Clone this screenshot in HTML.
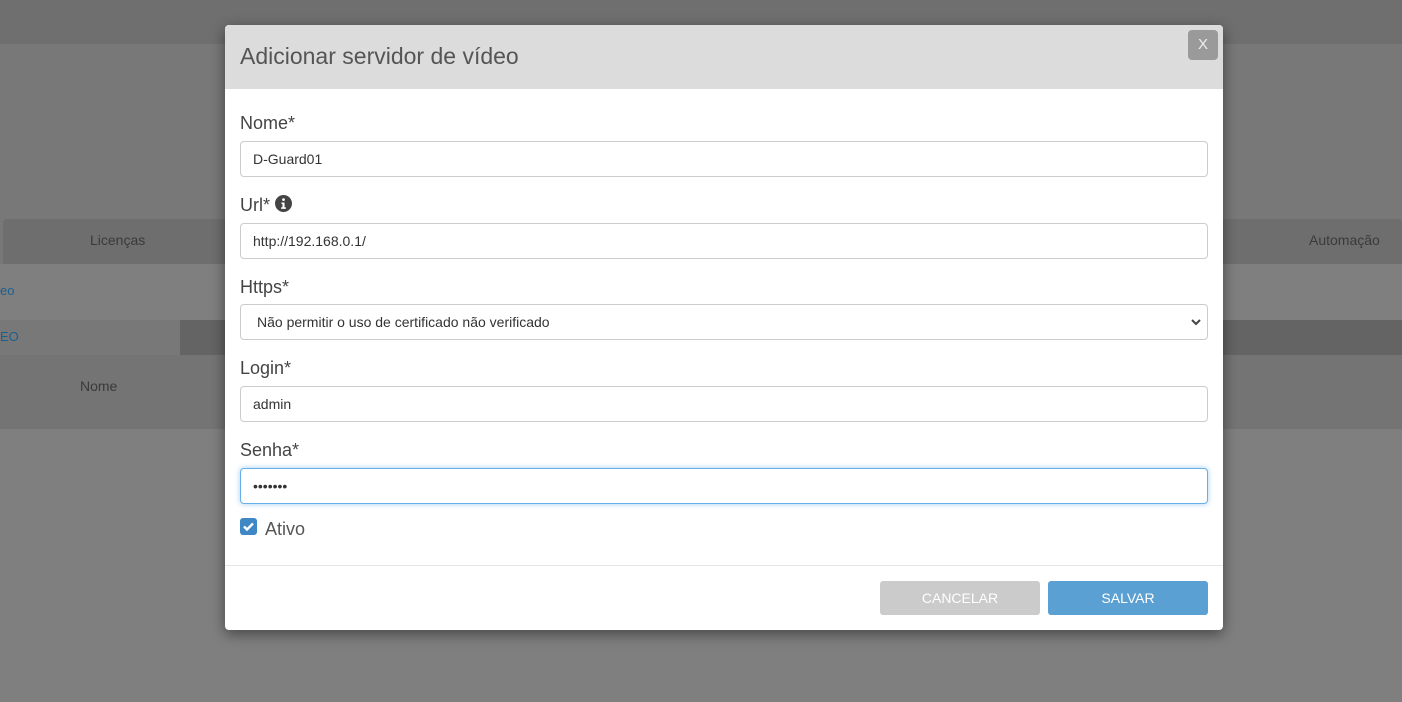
<!DOCTYPE html>
<html><head><meta charset="utf-8"><style>
*{box-sizing:border-box;margin:0;padding:0}
body{width:1402px;height:702px;overflow:hidden;background:#7f7f7f;font-family:"Liberation Sans",sans-serif;position:relative}
.a{position:absolute}
.lbl{position:absolute;left:15px;font-size:18px;color:#444}
.inp{position:absolute;left:15px;width:968px;height:36px;border:1px solid #ccc;border-radius:4px;font-size:14px;color:#333;padding:9px 12px;background:#fff}
</style></head><body>
<div class="a" style="left:0;top:0;width:1402px;height:44px;background:#6f6f6f"></div>
<div class="a" style="left:0;top:44px;width:1402px;height:175px;background:#787878"></div>
<div class="a" style="left:0;top:219px;width:1402px;height:45px;background:#787878"></div>
<div class="a" style="left:3px;top:219px;width:1399px;height:45px;background:#6e6e6e;border-radius:4px 4px 0 0"></div>
<div class="a" style="left:90px;top:232px;font-size:14px;color:#3a3a3a">Licenças</div>
<div class="a" style="left:1309px;top:232px;font-size:14px;color:#3a3a3a">Automação</div>
<div class="a" style="left:0;top:283px;font-size:13px;color:#1e5f8c">eo</div>
<div class="a" style="left:0;top:320px;width:1402px;height:35px;background:#787878"></div>
<div class="a" style="left:180px;top:320px;width:1222px;height:35px;background:#646464"></div>
<div class="a" style="left:0;top:329px;font-size:13px;color:#1e5f8c">EO</div>
<div class="a" style="left:0;top:355px;width:1402px;height:74px;background:#747474"></div>
<div class="a" style="left:80px;top:378px;font-size:14px;color:#3a3a3a">Nome</div>

<div class="a" style="left:225px;top:25px;width:998px;height:605px;background:#fff;border-radius:4px;box-shadow:0 4px 14px rgba(0,0,0,.45);overflow:hidden">
 <div class="a" style="left:0;top:0;width:998px;height:64px;background:#dcdcdc"></div>
 <div class="a" style="left:15px;top:18px;font-size:23px;color:#555">Adicionar servidor de vídeo</div>
 <div class="a" style="left:963px;top:5px;width:30px;height:30px;background:#9a9a9a;border-radius:4px;color:#eee;font-size:15px;text-align:center;line-height:30px">X</div>
 <div class="lbl" style="top:88px">Nome*</div>
 <div class="inp" style="top:116px">D-Guard01</div>
 <div class="lbl" style="top:170px">Url* <svg width="17" height="17" viewBox="0 0 16 16" style="vertical-align:-1px"><circle cx="8" cy="8" r="8" fill="#444"/><circle cx="8" cy="4.3" r="1.3" fill="#fff"/><path d="M6 7h3v4.5h1.2V13H5.8v-1.5H7V8.3H6z" fill="#fff"/></svg></div>
 <div class="inp" style="top:198px">http://192.168.0.1/</div>
 <div class="lbl" style="top:252px">Https*</div>
 <div class="inp" style="top:279px;padding-left:16px">Não permitir o uso de certificado não verificado<svg class="a" style="right:6px;top:14px" width="10" height="7" viewBox="0 0 10 7"><path d="M1 1l4 4 4-4" stroke="#444" stroke-width="2" fill="none"/></svg></div>
 <div class="lbl" style="top:333px">Login*</div>
 <div class="inp" style="top:361px">admin</div>
 <div class="lbl" style="top:415px">Senha*</div>
 <div class="inp" style="top:443px;border-color:#66afe9;box-shadow:0 0 6px rgba(102,175,233,.6)">•••••••</div>
 <div class="a" style="left:15px;top:493px;width:17px;height:17px;background:#3f88c5;border-radius:3px"><svg width="17" height="17" viewBox="0 0 17 17"><path d="M4 8.5l3 3 6-6" stroke="#fff" stroke-width="2.4" fill="none"/></svg></div>
 <div class="a" style="left:40px;top:494px;font-size:18px;color:#555">Ativo</div>
 <div class="a" style="left:0;top:540px;width:998px;height:1px;background:#e5e5e5"></div>
 <div class="a" style="left:655px;top:556px;width:160px;height:34px;background:#cbcbcb;border-radius:3px;color:#fff;font-size:14px;text-align:center;line-height:34px">CANCELAR</div>
 <div class="a" style="left:823px;top:556px;width:160px;height:34px;background:#5ba0d3;border-radius:3px;color:#fff;font-size:14px;text-align:center;line-height:34px">SALVAR</div>
</div>
</body></html>
